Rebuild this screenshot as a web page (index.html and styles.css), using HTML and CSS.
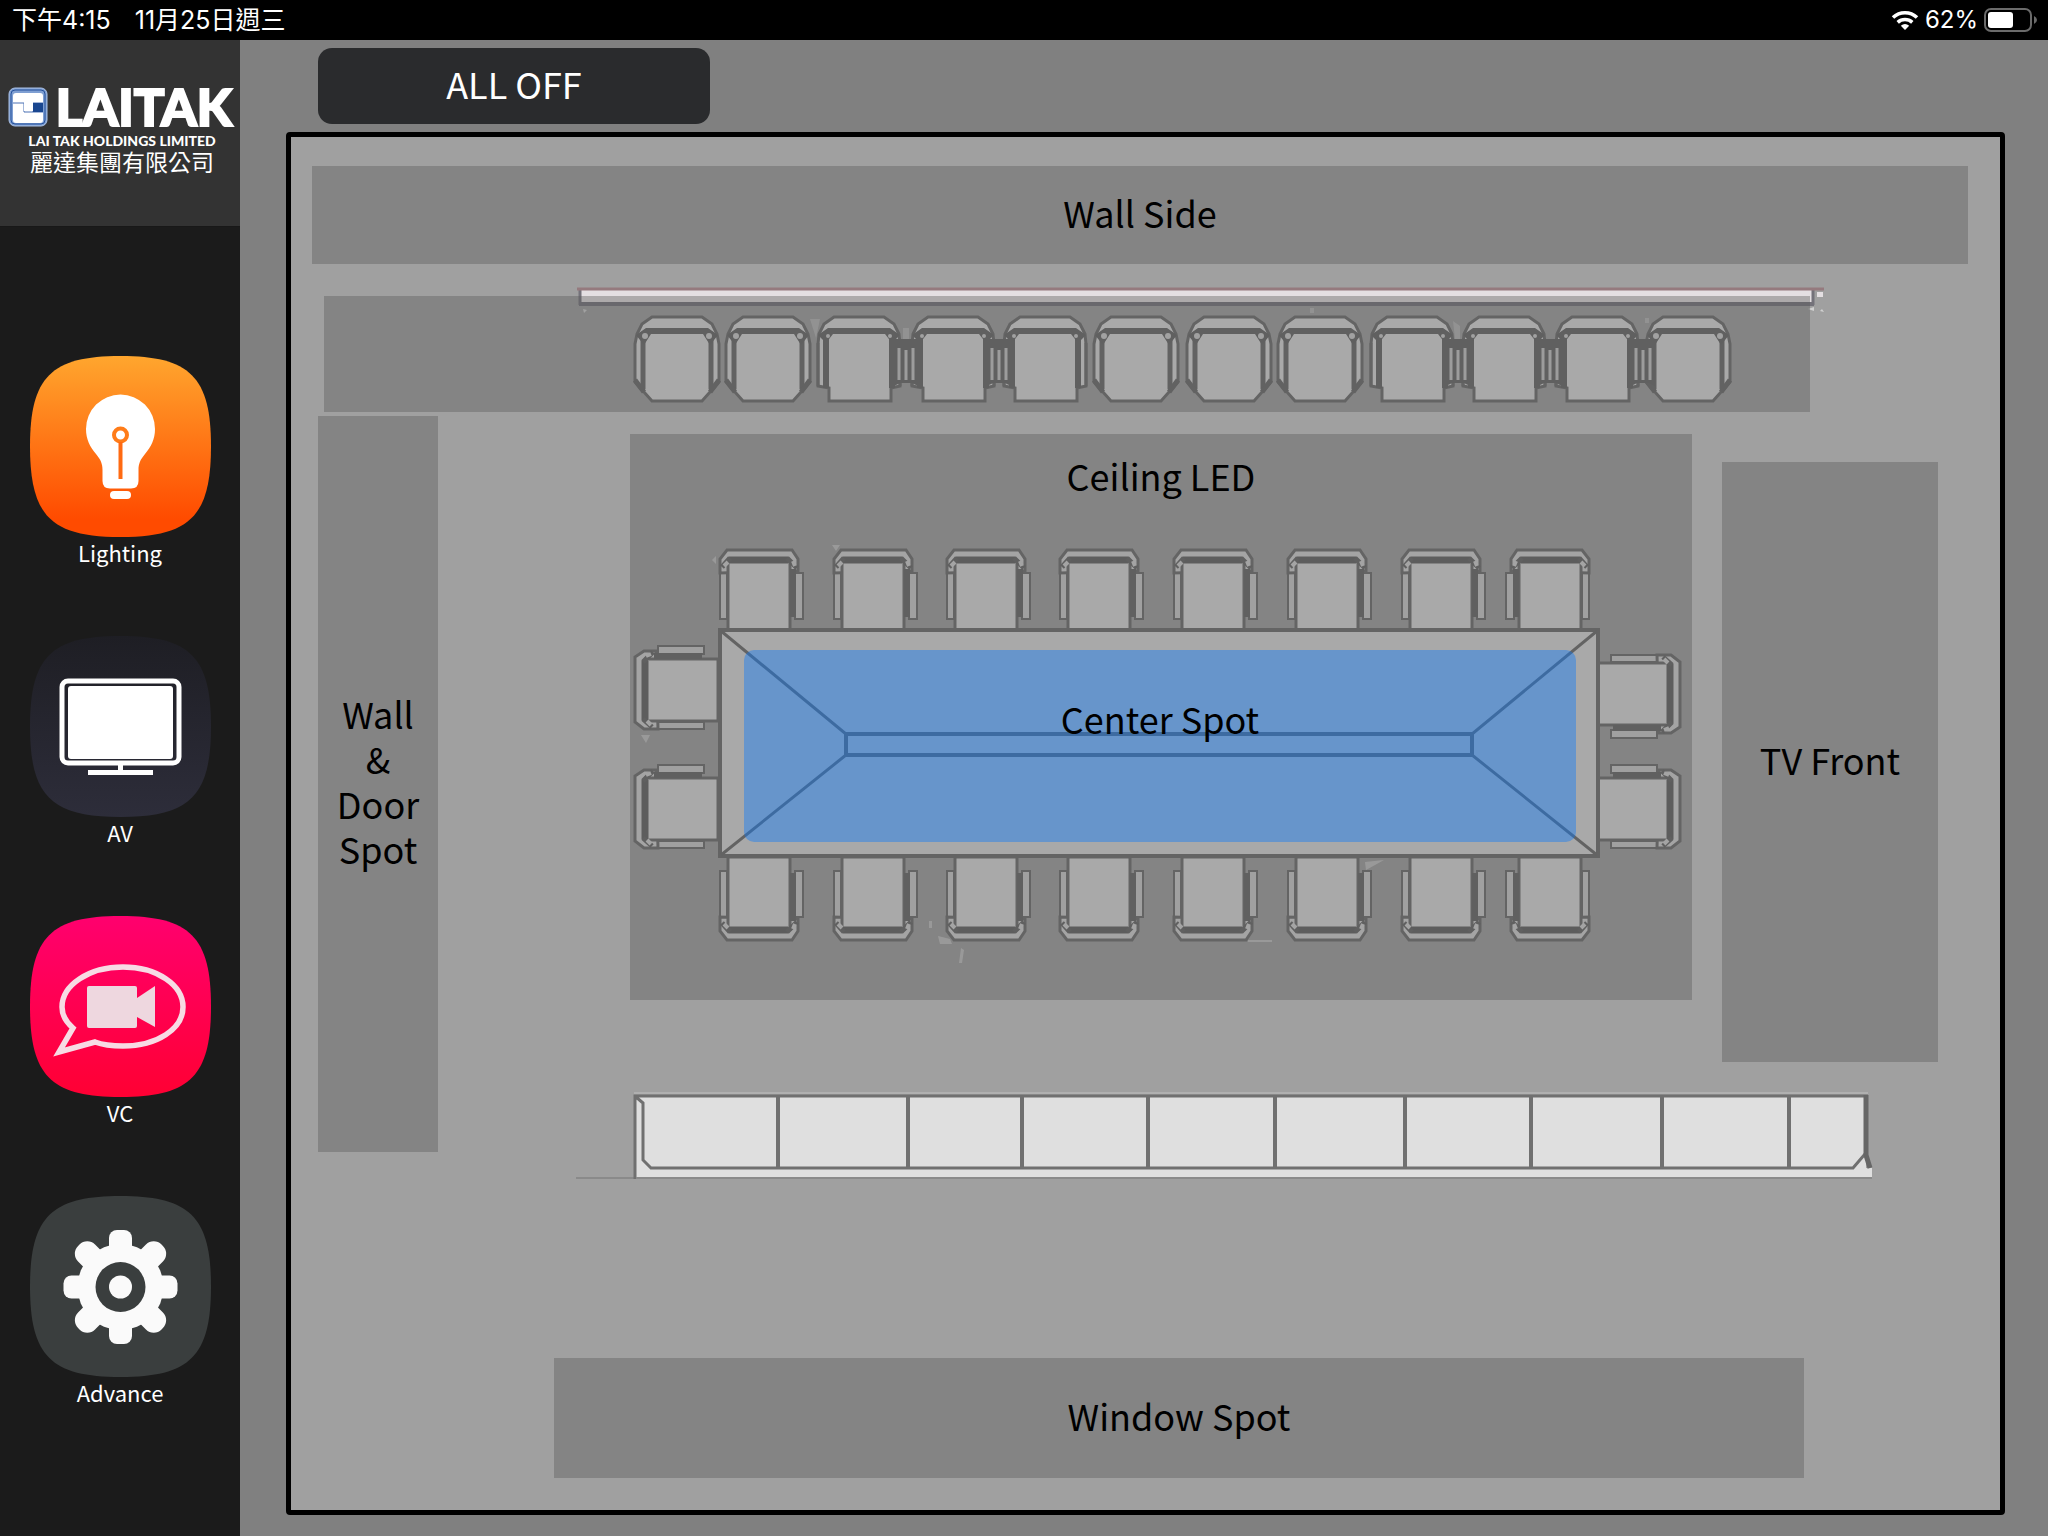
FILE: index.html
```html
<!DOCTYPE html>
<html lang="zh-Hant">
<head>
<meta charset="utf-8">
<meta name="viewport" content="width=device-width, initial-scale=1">
<title>Lighting</title>
<link rel="stylesheet" href="styles.css">
</head>
<body>
<header class="status">
  <div class="status-left"><span>下午4:15</span><span>11月25日週三</span></div>
  <div class="status-right">
    <svg class="wifi" viewBox="0 0 28 20" aria-hidden="true">
      <path d="M2 7.500A17.500 17.500 0 0 1 26 7.500M6.700 12.300A11 11 0 0 1 21.300 12.300" fill="none" stroke="#fff" stroke-width="3.600"/>
      <path d="M14 20L9.800 15.700A6.500 6.500 0 0 1 18.200 15.700Z" fill="#fff"/>
    </svg>
    <span>62%</span>
    <svg class="battery" viewBox="0 0 54 24" aria-hidden="true">
      <rect x="1" y="1" width="46" height="22" rx="6" fill="none" stroke="#6b6b6b" stroke-width="2"/>
      <rect x="4" y="4" width="25" height="16" rx="3" fill="#fff"/>
      <path d="M50 8Q53 9.500 53 12T50 16Z" fill="#6b6b6b"/>
    </svg>
  </div>
</header>

<div class="app">
  <aside class="sidebar">
    <div class="brand">
      <div class="brand-top">
        <svg class="emblem" viewBox="0 0 40 40" aria-hidden="true">
          <rect x="1" y="1" width="38" height="38" rx="6" fill="#7f9fd2" stroke="#a9c0e6" stroke-width="1"/>
          <rect x="3" y="3" width="34" height="34" rx="4" fill="none" stroke="#24519c" stroke-width="1"/>
          <rect x="5" y="6" width="30" height="30" rx="3" fill="#fff"/>
          <path d="M5 16H16V25H25V16H35" fill="none" stroke="#4a70b4" stroke-width="1"/>
          <path d="M16 15H25V24H16Z" fill="#fff"/>
          <path d="M25 25H35" stroke="#4a70b4"/>
          <rect x="25" y="16" width="10" height="9" fill="#1a4790"/>
        </svg>
        <span class="brand-name">LAITAK</span>
      </div>
      <span class="brand-sub">LAI TAK HOLDINGS LIMITED</span>
      <span class="brand-zh">麗達集團有限公司</span>
    </div>
    <nav class="menu">
      <a class="menu-item" href="#lighting">
        <svg class="menu-icon" viewBox="0 0 181 181" aria-hidden="true">
          <defs><linearGradient id="orange" x2="0" y2="1"><stop offset="0" stop-color="#ffa62e"/><stop offset=".9" stop-color="#ff4b00"/></linearGradient></defs>
          <path d="M90.500 0C160 0 181 21 181 90.500S160 181 90.500 181 0 160 0 90.500 21 0 90.500 0Z" fill="url(#orange)"/>
          <path d="M90.500 38.500A34.500 34.500 0 0 1 125 73C125 83 121 91 115 98C110 104 108.500 108 108.500 114V125Q108.500 132.500 101 132.500H80Q72.500 132.500 72.500 125V114C72.500 108 71 104 66 98C60 91 56 83 56 73A34.500 34.500 0 0 1 90.500 38.500Z" fill="#fff"/>
          <circle cx="90.500" cy="79" r="6.500" fill="none" stroke="#ff7c19" stroke-width="4"/>
          <path d="M90.500 86V123" stroke="#ff6a12" stroke-width="4"/>
          <rect x="80" y="135" width="21" height="8" rx="4" fill="#fff"/>
        </svg>
        <span>Lighting</span>
      </a>
      <a class="menu-item" href="#av">
        <svg class="menu-icon" viewBox="0 0 181 181" aria-hidden="true">
          <defs><linearGradient id="navy" x2="0" y2="1"><stop offset="0" stop-color="#1e1e24"/><stop offset="1" stop-color="#2d2d3a"/></linearGradient></defs>
          <path d="M90.500 0C160 0 181 21 181 90.500S160 181 90.500 181 0 160 0 90.500 21 0 90.500 0Z" fill="url(#navy)"/>
          <rect x="32" y="45" width="117" height="82" rx="6" fill="none" stroke="#fff" stroke-width="5"/>
          <rect x="38" y="50" width="105" height="73" rx="3" fill="#fff"/>
          <path d="M88 129H93V134H123V139H58V134H88Z" fill="#fff"/>
        </svg>
        <span>AV</span>
      </a>
      <a class="menu-item" href="#vc">
        <svg class="menu-icon" viewBox="0 0 181 181" aria-hidden="true">
          <defs><linearGradient id="pink" x2="0" y2="1"><stop offset="0" stop-color="#ff006e"/><stop offset="1" stop-color="#ff0033"/></linearGradient></defs>
          <path d="M90.500 0C160 0 181 21 181 90.500S160 181 90.500 181 0 160 0 90.500 21 0 90.500 0Z" fill="url(#pink)"/>
          <path d="M43 112C36 106 32 99 32 91C32 69 59 51 93 51S153 69 153 91 127 130 93 130C82 130 73 129 65 126L29 136Z" fill="none" stroke="#f7dbe4" stroke-width="5.500" stroke-miterlimit="10"/>
          <rect x="57" y="70" width="50" height="42" rx="2" fill="#eed7df"/>
          <path d="M107 82L125 70V111L107 101Z" fill="#eed7df"/>
        </svg>
        <span>VC</span>
      </a>
      <a class="menu-item" href="#advance">
        <svg class="menu-icon" viewBox="0 0 181 181" aria-hidden="true">
          <path d="M90.500 0C160 0 181 21 181 90.500S160 181 90.500 181 0 160 0 90.500 21 0 90.500 0Z" fill="#3a3e3e"/>
          <g fill="#fafafa">
            <circle cx="90.500" cy="91" r="43"/>
            <rect x="79" y="34" width="23" height="114" rx="8"/>
            <rect x="79" y="34" width="23" height="114" rx="8" transform="rotate(90 90.500 91)"/>
            <rect x="78.500" y="32" width="24" height="118" rx="11" transform="rotate(45 90.500 91)"/>
            <rect x="78.500" y="32" width="24" height="118" rx="11" transform="rotate(-45 90.500 91)"/>
          </g>
          <circle cx="90.500" cy="91" r="25" fill="#3a3e3e"/>
          <circle cx="90.500" cy="91" r="11.500" fill="#fafafa"/>
        </svg>
        <span>Advance</span>
      </a>
    </nav>
  </aside>

  <main class="main">
    <button class="all-off" type="button">ALL OFF</button>
    <section class="plan">
      <svg class="drawing" viewBox="291 137 1709 1373" aria-hidden="true">
        <defs>
          <!-- wall chair, origin at the centre of its back -->
          <g id="wall-chair">
            <path d="M-25 1H25L35 8L40 18L42 28V66L37 72L33 76L25 85H-25L-33 76L-37 72L-42 66V28L-40 18L-35 8Z" fill="#dedede" stroke="#6c6c6c" stroke-width="3"/>
            <path d="M-34 24V73M34 24V73" stroke="#686868" stroke-width="5"/>
            <path d="M-42 64L-33 76M42 64L33 76" stroke="#686868" stroke-width="5"/>
            <path d="M-41 19L-31 12H31L41 19L33 29L26 18H-26L-33 29Z" fill="#646464"/>
            <circle cx="-32" cy="20" r="3" fill="#d0d0d0"/><circle cx="32" cy="20" r="3" fill="#d0d0d0"/>
          </g>
          <!-- narrower chair, set close to its neighbours -->
          <g id="close-chair">
            <path d="M-25 1H25L35 8L40 18L41 28V70L32 72V85H-30V72L-41 70V28L-40 18L-35 8Z" fill="#dedede" stroke="#6c6c6c" stroke-width="3"/>
            <path d="M-33 22V72M33 22V72" stroke="#646464" stroke-width="6"/>
            <path d="M-41 27V70M41 27V70" stroke="#6c6c6c" stroke-width="3"/>
            <path d="M-41 19L-31 12H31L41 19L33 27L26 18H-26L-33 27Z" fill="#646464"/>
            <circle cx="-31" cy="20" r="2" fill="#d0d0d0"/><circle cx="31" cy="20" r="2" fill="#d0d0d0"/>
          </g>
          <g id="join">
            <path d="M-12 23H12V70L6 67H-6L-12 70Z" fill="#646464"/>
            <path d="M-7 32V64M0 34V64M7 32V64" stroke="#c8c8c8" stroke-width="3"/>
          </g>
          <!-- table chair, origin at its top left corner -->
          <g id="chair">
            <path d="M1 22H8V70H1ZM76 24H84V70H76Z" fill="#cfcfcf" stroke="#6c6c6c" stroke-width="2"/>
            <path d="M1 24V10L8 1H73L79 10V22H72L1 24Z" fill="#d6d6d6" stroke="#6c6c6c" stroke-width="3"/>
            <path d="M9 12H71V84H9Z" fill="#dedede" stroke="#6c6c6c" stroke-width="3"/>
            <path d="M10 11H69" stroke="#606060" stroke-width="7"/>
            <path d="M74 20V68" stroke="#646464" stroke-width="6"/>
            <path d="M3 18L11 9M78 19L68 9" stroke="#646464" stroke-width="5"/>
            <path d="M5 17L9 13M76 17L74 12" stroke="#d6d6d6" stroke-width="4"/>
          </g>
        </defs>

        <!-- wall rail -->
        <rect x="580" y="289" width="1233" height="16" fill="#e4dfe2"/>
        <path d="M580 290V305M1813 290V305" stroke="#74727a" stroke-width="3"/>
        <path d="M579 304H1814" stroke="#74727a" stroke-width="4"/>
        <path d="M577 289H1824" stroke="#957a7e" stroke-width="3"/>
        <rect x="1817" y="292" width="6" height="5" fill="#e4dfe2"/>
        <path d="M1808 309L1814 307V311ZM1820 311L1822 309L1824 312ZM583 309L587 310L584 313Z" fill="#d0d0d0"/>

        <use href="#wall-chair" x="677" y="316"/>
        <use href="#wall-chair" x="768" y="316"/>
        <use href="#close-chair" x="859" y="316"/>
        <use href="#close-chair" x="953" y="316"/>
        <use href="#close-chair" x="1045" y="316"/>
        <use href="#wall-chair" x="1136" y="316"/>
        <use href="#wall-chair" x="1229" y="316"/>
        <use href="#wall-chair" x="1320" y="316"/>
        <use href="#close-chair" x="1412" y="316"/>
        <use href="#close-chair" x="1504" y="316"/>
        <use href="#close-chair" x="1597" y="316"/>
        <use href="#wall-chair" x="1688" y="316"/>
        <use href="#join" x="906" y="316"/>
        <use href="#join" x="999" y="316"/>
        <use href="#join" x="1458" y="316"/>
        <use href="#join" x="1550" y="316"/>
        <use href="#join" x="1643" y="316"/>
        <path d="M810 319H820L816 338ZM903 328H909V339H903ZM1453 321L1460 326V339H1455ZM1310 308H1314V313H1310ZM1645 318H1649V323H1645Z" fill="#b8b8b8"/>

        <!-- chairs around the table -->
        <use href="#chair" x="719" y="549"/>
        <use href="#chair" x="833" y="549"/>
        <use href="#chair" x="946" y="549"/>
        <use href="#chair" x="1059" y="549"/>
        <use href="#chair" x="1173" y="549"/>
        <use href="#chair" x="1287" y="549"/>
        <use href="#chair" x="1401" y="549"/>
        <use href="#chair" transform="translate(1590 549) scale(-1 1)"/>
        <use href="#chair" transform="translate(719 941) scale(1 -1)"/>
        <use href="#chair" transform="translate(833 941) scale(1 -1)"/>
        <use href="#chair" transform="translate(946 941) scale(1 -1)"/>
        <use href="#chair" transform="translate(1059 941) scale(1 -1)"/>
        <use href="#chair" transform="translate(1173 941) scale(1 -1)"/>
        <use href="#chair" transform="translate(1287 941) scale(1 -1)"/>
        <use href="#chair" transform="translate(1401 941) scale(1 -1)"/>
        <use href="#chair" transform="translate(1590 941) scale(-1 -1)"/>
        <use href="#chair" transform="translate(634 730) rotate(-90)"/>
        <use href="#chair" transform="translate(634 849) rotate(-90)"/>
        <use href="#chair" transform="translate(1681 654) rotate(90)"/>
        <use href="#chair" transform="translate(1681 849) scale(-1 1) rotate(-90)"/>
        <path d="M832 545H840L836 551ZM641 735H650L646 743ZM938 936L950 939L952 944H940ZM961 948L964 950L962 963H959ZM929 921H932V928H929ZM1365 862L1384 860L1366 870ZM1248 940H1272V942H1248ZM712 560L716 556V564Z" fill="#c4c4c4"/>

        <!-- table -->
        <rect x="720" y="630" width="878" height="226" fill="#dedede" stroke="#6c6c6c" stroke-width="4"/>
        <path d="M721 631L846 734V755L721 855M1597 631L1472 734V755L1597 855" fill="none" stroke="#6a6a6a" stroke-width="3"/>
        <path d="M846 734H1472V755H846Z" fill="none" stroke="#6a6a6a" stroke-width="4"/>

        <!-- cabinets -->
        <path d="M576 1178H635" stroke="#8a8a8a" stroke-width="2"/>
        <path d="M635 1095H1866V1168H1872V1178H635Z" fill="#dfdfdf"/>
        <path d="M634 1093H1868" stroke="#b0b0b0" stroke-width="2"/>
        <path d="M635 1179V1096H1868M636 1097L643 1103V1160L651 1168H1853L1865 1154" fill="none" stroke="#707070" stroke-width="3"/>
        <path d="M636 1178H1872" stroke="#8a8a8a" stroke-width="2"/>
        <path d="M778 1096V1168M908 1096V1168M1022 1096V1168M1148 1096V1168M1275 1096V1168M1405 1096V1168M1531 1096V1168M1662 1096V1168M1789 1096V1168" stroke="#707070" stroke-width="4"/>
        <path d="M1866 1095V1155L1870 1168" fill="none" stroke="#666" stroke-width="5"/>
      </svg>
      <button class="zone wall-side" type="button">Wall Side</button>
      <button class="zone wall-row" type="button" aria-label="Wall seats"></button>
      <button class="zone door" type="button">Wall<br>&amp;<br>Door<br>Spot</button>
      <button class="zone ceiling" type="button">Ceiling LED</button>
      <button class="zone tv" type="button">TV Front</button>
      <button class="zone center active" type="button">Center Spot</button>
      <button class="zone window" type="button">Window Spot</button>
    </section>
  </main>
</div>
</body>
</html>
```
FILE: styles.css
```css
* {
  box-sizing: border-box;
}

body {
  margin: 0;
  min-height: 100vh;
  display: flex;
  flex-direction: column;
  background: #808080;
  color: #fff;
  font-family: "Noto Sans CJK TC", "Noto Sans", sans-serif;
}

svg {
  display: block;
}

button {
  margin: 0;
  padding: 0 0 6px;
  border: 0;
  font: inherit;
  font-size: 36px;
  line-height: 45px;
  cursor: pointer;
}

.status {
  height: 40px;
  padding: 0 10px 0 12px;
  display: flex;
  align-items: center;
  justify-content: space-between;
  background: #000;
  font-family: Inter, "Noto Sans CJK TC", sans-serif;
  font-size: 25px;
  line-height: 40px;
}

.status-left {
  display: flex;
  gap: 24px;
}

.status-right {
  display: flex;
  align-items: center;
  gap: 6px;
  font-size: 24px;
}

.wifi {
  width: 28px;
  height: 20px;
}

.battery {
  width: 54px;
  height: 24px;
}

.app {
  flex: 1;
  display: flex;
}

.sidebar {
  flex: none;
  width: 240px;
  background: #1b1b1b;
}

.brand {
  height: 187px;
  padding-top: 41px;
  display: flex;
  flex-direction: column;
  align-items: center;
  background: #333;
  border-bottom: 1px solid #181818;
}

.brand-top {
  display: flex;
  align-items: center;
  gap: 8px;
  height: 52px;
}

.emblem {
  width: 40px;
  height: 40px;
}

.brand-name {
  font: 900 51px/52px Lato, sans-serif;
  -webkit-text-stroke: 2px #fff;
}

.brand-sub {
  padding-left: 4px;
  font: 900 14px/16px Lato, sans-serif;
}

.brand-zh {
  padding-left: 4px;
  font-size: 23px;
  line-height: 24px;
}

.menu {
  padding-top: 129px;
  display: flex;
  flex-direction: column;
  gap: 69px;
}

.menu-item {
  display: flex;
  flex-direction: column;
  align-items: center;
  color: #fff;
  font-size: 22px;
  line-height: 30px;
  text-decoration: none;
}

.menu-icon {
  width: 181px;
  height: 181px;
}

.main {
  flex: 1;
  min-width: 0;
  padding: 8px 43px 21px 46px;
  display: flex;
  flex-direction: column;
  gap: 8px;
}

.all-off {
  width: 392px;
  height: 76px;
  margin-left: 32px;
  border-radius: 14px;
  background: #2a2b2d;
  color: #fff;
}

.plan {
  position: relative;
  aspect-ratio: 1719 / 1383;
  border: 5px solid #000;
  border-radius: 4px;
  background: #a0a0a0;
}

.drawing {
  width: 100%;
  height: 100%;
}

/* Zones sit on the drawing; x, y, w and h are in its 1709 x 1373 units. */
.zone {
  position: absolute;
  left: calc(var(--x) / 1709 * 100%);
  top: calc(var(--y) / 1373 * 100%);
  width: calc(var(--w) / 1709 * 100%);
  height: calc(var(--h) / 1373 * 100%);
  display: flex;
  align-items: center;
  justify-content: center;
  background: rgba(90, 90, 90, 0.4);
  color: #000;
}

.wall-side {
  --x: 21;
  --y: 29;
  --w: 1656;
  --h: 98;
}

.wall-row {
  --x: 33;
  --y: 159;
  --w: 1486;
  --h: 116;
}

.door {
  --x: 27;
  --y: 279;
  --w: 120;
  --h: 736;
}

.ceiling {
  --x: 339;
  --y: 297;
  --w: 1062;
  --h: 566;
  align-items: flex-start;
  padding-top: 19px;
}

.tv {
  --x: 1431;
  --y: 325;
  --w: 216;
  --h: 600;
}

.center {
  --x: 453;
  --y: 513;
  --w: 832;
  --h: 192;
  padding-bottom: 56px;
  border-radius: 10px;
}

.window {
  --x: 263;
  --y: 1221;
  --w: 1250;
  --h: 120;
}

.active {
  background: rgba(4, 119, 255, 0.4);
}
```
